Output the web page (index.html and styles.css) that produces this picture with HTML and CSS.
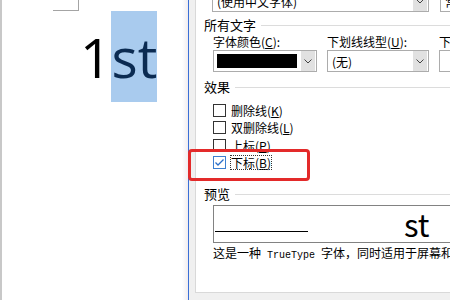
FILE: index.html
```html
<!DOCTYPE html>
<html lang="zh-CN">
<head>
<meta charset="UTF-8" />
<title>字体</title>
<link rel="stylesheet" href="styles.css">
</head>
<body>

  <!-- document page on the left -->
  <div class="doc">
    <div class="crop-mark"></div>
    <div class="word">1<span class="sel">st</span></div>
  </div>

  <!-- font dialog -->
  <div class="dialog">
    <div class="page">
      <div class="top-row">
        <div class="combo combo-wide"><span class="combo-text">(使用中文字体)</span><span class="arrow"><svg width="8" height="5" viewBox="0 0 8 5"><polyline points="0.5,0.5 4,4 7.5,0.5" fill="none" stroke="#444" stroke-width="1"/></svg></span></div>
        <div class="combo combo-cut"><span class="combo-text">常规</span></div>
      </div>

      <div class="group-title"><span>所有文字</span><i></i></div>
      <div class="fields">
        <label>字体颜色(<u>C</u>):</label>
        <label>下划线线型(<u>U</u>):</label>
        <label>下划线颜色(<u>I</u>):</label>
        <div class="combo"><span class="swatch"></span><span class="arrow"><svg width="8" height="5" viewBox="0 0 8 5"><polyline points="0.5,0.5 4,4 7.5,0.5" fill="none" stroke="#444" stroke-width="1"/></svg></span></div>
        <div class="combo"><span class="combo-text">(无)</span><span class="arrow"><svg width="8" height="5" viewBox="0 0 8 5"><polyline points="0.5,0.5 4,4 7.5,0.5" fill="none" stroke="#444" stroke-width="1"/></svg></span></div>
        <div class="combo"></div>
      </div>

      <div class="group-title effects"><span>效果</span><i></i></div>
      <div class="checks">
        <div class="check-row"><span class="box"></span><span>删除线(<u>K</u>)</span></div>
        <div class="check-row"><span class="box"></span><span>双删除线(<u>L</u>)</span></div>
        <div class="check-row"><span class="box"></span><span>上标(<u>P</u>)</span></div>
        <div class="check-row"><span class="box checked"><svg width="11" height="11" viewBox="0 0 11 11"><polyline points="1.5,5.5 4,8 9.5,2.5" fill="none" stroke="#2a6fc9" stroke-width="1.3"/></svg></span><span class="focus">下标(<u>B</u>)</span></div>
      </div>

      <div class="group-title preview-title"><span>预览</span><i></i></div>
      <div class="preview">
        <span class="rule"></span>
        <span class="sample">st</span>
      </div>
      <div class="caption">这是一种<span class="mono"> TrueType </span>字体，同时适用于屏幕和打印机。</div>
    </div>
  </div>

  <!-- red highlight drawn over the dialog -->
  <div class="mark-box"></div>

</body>
</html>
```

FILE: styles.css
```css
body {
  margin: 0;
  width: 450px;
  height: 300px;
  display: flex;
  overflow: hidden;
  position: relative;
  font-family: "Noto Sans CJK SC", "Noto Sans", sans-serif;
  font-size: 12px;
  color: #000;
}
.doc {
  width: 186px;
  height: 300px;
  flex-shrink: 0;
  border-left: 2px solid #c8c8c8;
  border-right: 1px solid #3a6fd6;
  background: linear-gradient(to right, #fff 0, #fff 180px, #f1edf0 186px);
}
.crop-mark {
  margin-left: 51px;
  width: 25px;
  height: 10px;
  border-right: 1px solid #a4a4a4;
  border-bottom: 1px solid #a4a4a4;
}
.word {
  padding-left: 78px;
  font-family: "Open Sans", sans-serif;
  font-size: 55px;
  line-height: 91px;
  height: 91px;
  white-space: nowrap;
}
.sel {
  display: inline-block;
  background: #a9cbee;
  color: #0b2b52;
}
.dialog {
  flex: 1;
  background: #f0f0f0;
  padding-left: 6px;
  overflow: hidden;
}
.page {
  width: 300px;
  height: 292px;
  background: #fff;
  border-left: 1px solid #d9d9d9;
  border-bottom: 1px solid #d9d9d9;
  padding-left: 8px;
  overflow: hidden;
}
.top-row {
  display: flex;
  margin-top: -10px;
  margin-left: 8px;
  gap: 11px;
}
.combo {
  height: 22px;
  box-sizing: border-box;
  border: 1px solid #acacac;
  background: #fff;
  display: flex;
  align-items: center;
  position: relative;
  overflow: hidden;
}
.combo-wide {
  width: 217px;
}
.combo-cut {
  width: 60px;
}
.combo-text {
  flex: 1;
  padding-left: 4px;
  white-space: nowrap;
}
.arrow {
  width: 14px;
  height: 20px;
  margin-left: auto;
  margin-right: 1px;
  background: #e1e1e1;
  display: flex;
  align-items: center;
  justify-content: center;
}
.swatch {
  width: 80px;
  height: 14px;
  margin-left: 3px;
  background: #000;
}
.group-title {
  display: flex;
  align-items: center;
  gap: 5px;
  margin-top: 5px;
  font-size: 13px;
  line-height: 16px;
}
.group-title i {
  flex: 1;
  height: 1px;
  background: #dcdcdc;
}
.fields {
  display: grid;
  grid-template-columns: 104px 102px 60px;
  column-gap: 10px;
  margin-left: 9px;
  margin-top: 2px;
}
.fields label {
  line-height: 14px;
  height: 15px;
  white-space: nowrap;
}
.effects {
  margin-top: 7px;
}
.checks {
  margin-top: 7px;
  margin-left: 9px;
}
.check-row {
  height: 17.33px;
  display: flex;
  align-items: center;
  gap: 5px;
  white-space: nowrap;
}
.box {
  width: 13px;
  height: 13px;
  box-sizing: border-box;
  border: 1px solid #333;
  background: #fff;
  display: flex;
  align-items: center;
  justify-content: center;
}
.box.checked {
  border-color: #3c7fd0;
}
.focus {
  outline: 1px dotted #333;
  line-height: 13px;
}
.preview-title {
  margin-top: 15px;
}
.preview {
  margin-top: 3px;
  margin-left: 9px;
  height: 38px;
  box-sizing: border-box;
  border: 1px solid #828282;
  border-right: none;
  display: flex;
  align-items: flex-end;
}
.rule {
  width: 93px;
  height: 1px;
  background: #000;
  margin-left: 1px;
  margin-bottom: 10px;
}
.sample {
  margin-left: 96px;
  font-size: 31px;
  line-height: 36px;
}
.caption {
  margin-top: 2px;
  margin-left: 9px;
  line-height: 16px;
  white-space: nowrap;
}
.mono {
  font-family: "Liberation Mono", monospace;
  font-size: 10px;
  white-space: pre;
}
.mark-box {
  position: absolute;
  left: 188px;
  top: 149px;
  width: 122px;
  height: 32px;
  box-sizing: border-box;
  border: 3px solid #e32a2a;
  border-radius: 4px;
}
```
